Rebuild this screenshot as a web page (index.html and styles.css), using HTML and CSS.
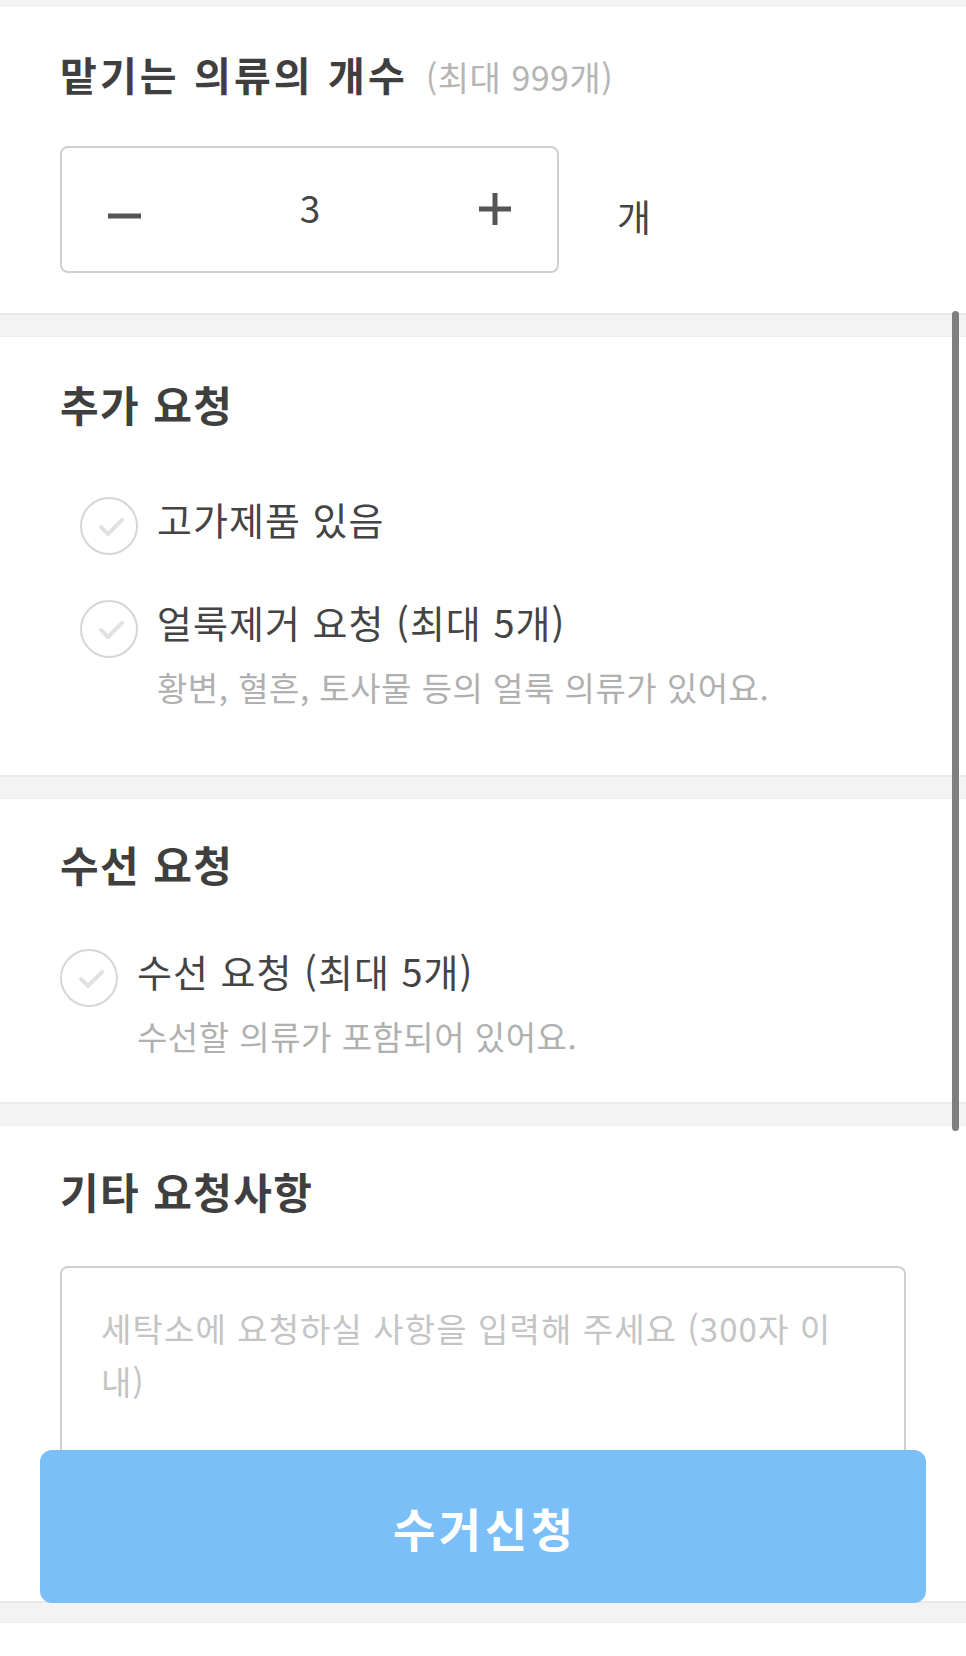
FILE: index.html
```html
<!DOCTYPE html>
<html lang="ko">
<head>
<meta charset="utf-8">
<title>수거신청</title>
<link rel="stylesheet" href="styles.css">
</head>
<body>
<div class="band-top"></div>

<section class="section sec-count">
  <div class="title-row">
    <h2 class="count-title">맡기는 의류의 개수</h2>
    <span class="count-max">(최대 999개)</span>
  </div>
  <div class="stepper-row">
    <div class="stepper">
      <svg class="minus" width="33" height="6" viewBox="0 0 33 6"><rect x="0" y="0.5" width="33" height="5" fill="#555"/></svg>
      <span class="num">3</span>
      <svg class="plus" width="32" height="32" viewBox="0 0 32 32"><rect x="0" y="13.5" width="32" height="5" fill="#555"/><rect x="13.5" y="0" width="5" height="32" fill="#555"/></svg>
    </div>
    <span class="unit">개</span>
  </div>
</section>

<div class="band"></div>

<section class="section sec-extra">
  <h2 class="sec-title">추가 요청</h2>
  <div class="options indent">
    <div class="option">
      <svg class="check" width="58" height="58" viewBox="0 0 58 58"><circle cx="29" cy="29" r="28" fill="none" stroke="#d6d6d6" stroke-width="2"/><polyline points="21,30 28,37 42,23" fill="none" stroke="#e1e1e1" stroke-width="4" stroke-linecap="round" stroke-linejoin="round"/></svg>
      <div class="opt-body">
        <div class="opt-text">고가제품 있음</div>
      </div>
    </div>
    <div class="option">
      <svg class="check" width="58" height="58" viewBox="0 0 58 58"><circle cx="29" cy="29" r="28" fill="none" stroke="#d6d6d6" stroke-width="2"/><polyline points="21,30 28,37 42,23" fill="none" stroke="#e1e1e1" stroke-width="4" stroke-linecap="round" stroke-linejoin="round"/></svg>
      <div class="opt-body">
        <div class="opt-text">얼룩제거 요청 (최대 5개)</div>
        <div class="opt-sub">황변, 혈흔, 토사물 등의 얼룩 의류가 있어요.</div>
      </div>
    </div>
  </div>
</section>

<div class="band"></div>

<section class="section sec-repair">
  <h2 class="sec-title">수선 요청</h2>
  <div class="options">
    <div class="option">
      <svg class="check" width="58" height="58" viewBox="0 0 58 58"><circle cx="29" cy="29" r="28" fill="none" stroke="#d6d6d6" stroke-width="2"/><polyline points="21,30 28,37 42,23" fill="none" stroke="#e1e1e1" stroke-width="4" stroke-linecap="round" stroke-linejoin="round"/></svg>
      <div class="opt-body">
        <div class="opt-text">수선 요청 (최대 5개)</div>
        <div class="opt-sub">수선할 의류가 포함되어 있어요.</div>
      </div>
    </div>
  </div>
</section>

<div class="band"></div>

<section class="section sec-etc">
  <h2 class="sec-title">기타 요청사항</h2>
  <textarea class="memo" placeholder="세탁소에 요청하실 사항을 입력해 주세요 (300자 이내)"></textarea>
</section>

<div class="band band-last"></div>
<div class="tail"></div>

<button class="submit" type="button">수거신청</button>
<div class="scrollbar"></div>
</body>
</html>
```

FILE: styles.css
```css
html, body {
  margin: 0;
  padding: 0;
  overflow: hidden;
}
body {
  width: 966px;
  background: #fff;
  color: #444;
  font-family: "Noto Sans CJK KR", "Noto Sans", sans-serif;
}
h2 {
  margin: 0;
}
.band-top {
  height: 5px;
  background: #f3f3f3;
  border-bottom: 1px solid #eaeaea;
}
.band {
  height: 21px;
  background: #f3f3f3;
  border-top: 2px solid #e9e9e9;
  border-bottom: 1px solid #eeeeee;
}
.band-last {
  height: 19px;
}
.tail {
  height: 31px;
}
.section {
  padding: 40px 60px 44px;
}

/* count section */
.sec-count {
  padding-top: 43px;
  padding-bottom: 40px;
}
.title-row {
  display: flex;
  align-items: baseline;
}
.count-title {
  font-size: 40px;
  font-weight: 700;
  letter-spacing: 3.1px;
  line-height: 50px;
  color: #3f3f3f;
}
.count-max {
  font-size: 34px;
  color: #b5b5b5;
  margin-left: 18px;
  letter-spacing: 0.5px;
}
.stepper-row {
  margin-top: 45px;
  display: flex;
  align-items: center;
}
.stepper {
  box-sizing: border-box;
  width: 499px;
  height: 127px;
  border: 2px solid #cfcfcf;
  border-radius: 8px;
  display: flex;
  align-items: center;
  justify-content: space-between;
  padding: 0 46px 0 46px;
}
.minus {
  display: block;
  margin-top: 12px;
}
.plus {
  display: block;
  margin-top: -2px;
}
.num {
  font-size: 37px;
  line-height: 1;
  color: #444;
  margin-top: -4px;
}
.unit {
  font-size: 37px;
  margin-left: 58px;
  margin-top: 13px;
  color: #444;
  letter-spacing: 1px;
}

/* section titles */
.sec-title {
  font-size: 42px;
  font-weight: 700;
  line-height: 50px;
  letter-spacing: 1.4px;
  color: #3f3f3f;
}

/* options */
.sec-extra {
  padding-top: 42px;
  padding-bottom: 68px;
}
.sec-extra .options {
  margin-top: 68px;
}
.sec-repair {
  padding-bottom: 46px;
}
.sec-repair .options {
  margin-top: 60px;
}
.indent {
  padding-left: 20px;
}
.option {
  display: flex;
  gap: 19px;
}
.option + .option {
  margin-top: 45px;
}
.check {
  flex: none;
  display: block;
}
.opt-body {
  margin-top: -4px;
}
.opt-text {
  font-size: 38px;
  line-height: 52px;
  letter-spacing: 1px;
  color: #444;
}
.opt-sub {
  font-size: 33px;
  line-height: 40px;
  margin-top: 19px;
  letter-spacing: 0.5px;
  color: #b0b0b0;
}

/* memo */
.sec-etc {
  padding-bottom: 95px;
}
.memo {
  display: block;
  box-sizing: border-box;
  margin-top: 50px;
  width: 846px;
  height: 240px;
  border: 2px solid #cfcfcf;
  border-radius: 8px;
  padding: 34px 45px 0 39px;
  font-family: inherit;
  font-size: 33px;
  line-height: 53px;
  letter-spacing: 1.1px;
  color: #444;
  resize: none;
  outline: none;
  background: #fff;
}
.memo::placeholder {
  color: #c4c4c4;
}

/* overlays */
.submit {
  position: fixed;
  left: 40px;
  right: 40px;
  bottom: 53px;
  height: 153px;
  border: none;
  border-radius: 12px;
  background: #7bbff8;
  color: #fff;
  font-family: inherit;
  font-size: 46px;
  font-weight: 700;
  letter-spacing: 3.6px;
  display: flex;
  align-items: center;
  justify-content: center;
  padding: 0 0 0 3.6px;
}
.scrollbar {
  position: fixed;
  left: 952px;
  top: 311px;
  width: 7px;
  height: 820px;
  border-radius: 4px;
  background: #7f7f7f;
}
```
